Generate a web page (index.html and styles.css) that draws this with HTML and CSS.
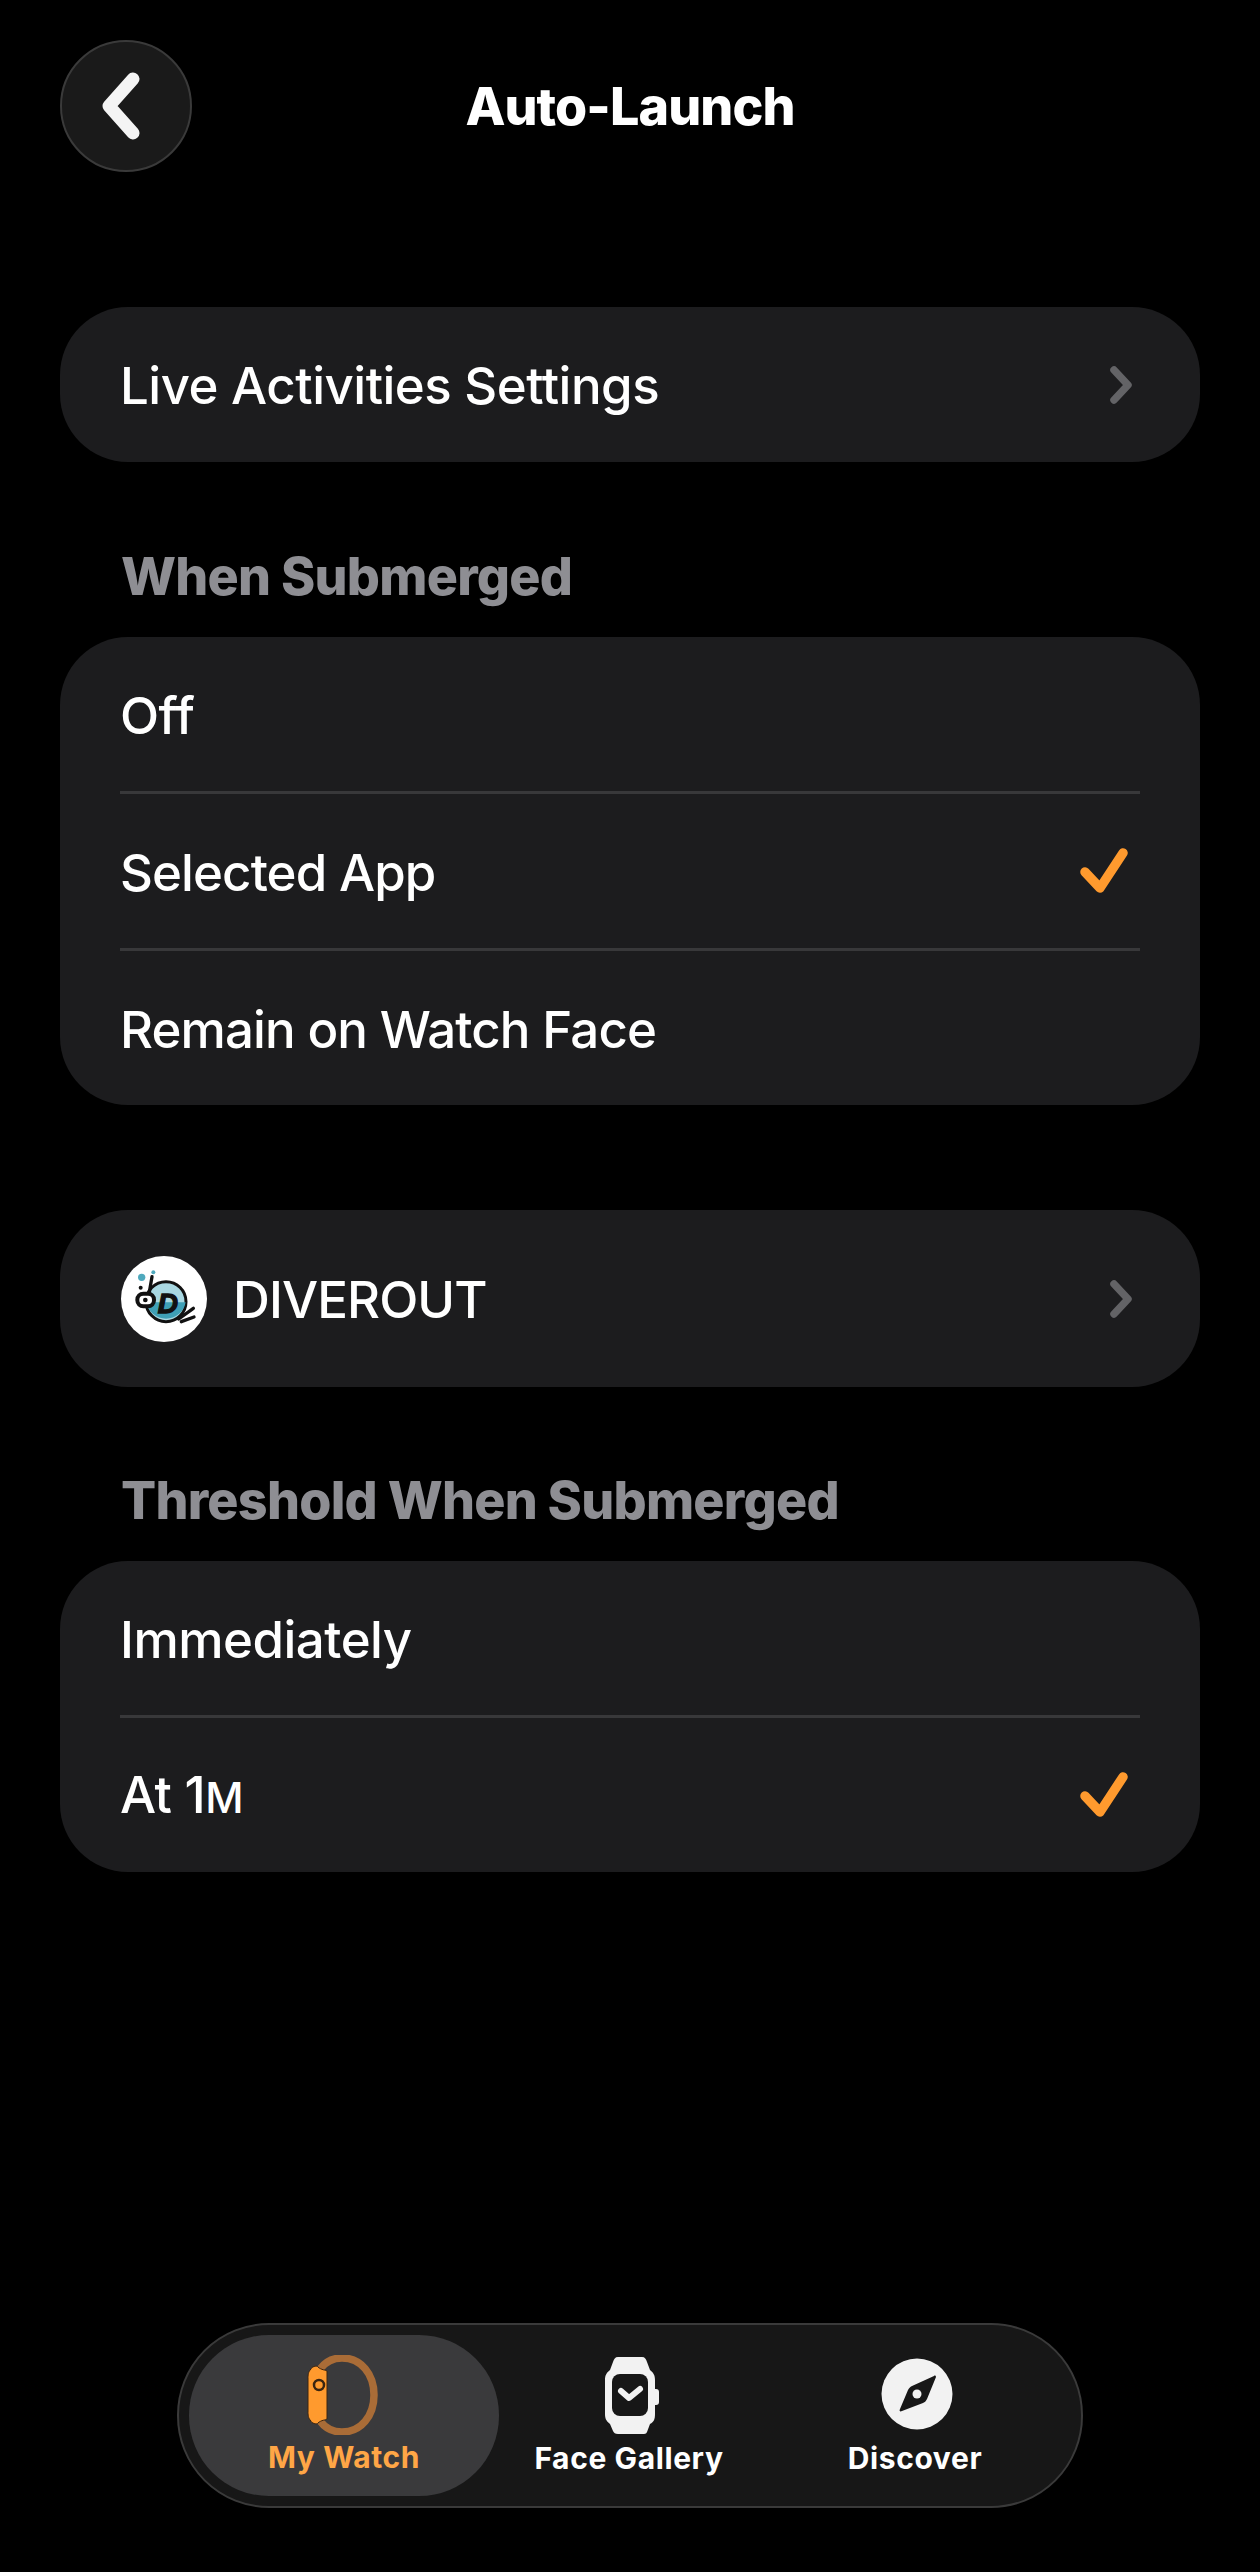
FILE: index.html
```html
<!DOCTYPE html>
<html lang="en">
<head>
<meta charset="utf-8">
<title>Auto-Launch</title>
<link rel="stylesheet" href="styles.css">
</head>
<body>
<div class="page">
  <header class="topbar">
    <button class="back" aria-label="Back">
      <svg class="back-icon" viewBox="0 0 48 72"><path d="M36 9 12 36l24 27"/></svg>
    </button>
    <h1 class="title">Auto-Launch</h1>
  </header>

  <section class="card card-live">
    <div class="row">
      <span class="row-text">Live Activities Settings</span>
      <svg class="chevron" viewBox="0 0 26 40"><path d="M6 5l14 15L6 35"/></svg>
    </div>
  </section>

  <h2 class="label label-first">When Submerged</h2>
  <section class="card card-list">
    <div class="row"><span class="row-text">Off</span></div>
    <div class="divider"></div>
    <div class="row">
      <span class="row-text row-text-tight">Selected App</span>
      <svg class="check" viewBox="0 0 50 46"><path d="M5 24l15 16L43 5"/></svg>
    </div>
    <div class="divider"></div>
    <div class="row"><span class="row-text row-text-tight">Remain on Watch Face</span></div>
  </section>

  <section class="card card-app">
    <div class="row row-app">
      <svg class="logo" viewBox="33 33 258 258">
        <circle cx="162" cy="162" r="129" fill="#fff"/>
        <circle cx="95" cy="97" r="11" fill="#4fa9bd"/>
        <circle cx="130" cy="82" r="6" fill="#4fa9bd"/>
        <circle cx="92" cy="128" r="6" fill="#111"/>
        <circle cx="168" cy="170" r="60" fill="#a9d8e2" stroke="#111" stroke-width="9"/>
        <path d="M109 172a60 60 0 0 0 118 0z" fill="#3fa0b6"/>
        <path d="M126 95l-9 52" fill="none" stroke="#111" stroke-width="10" stroke-linecap="round"/>
        <rect x="82" y="146" width="50" height="38" rx="18" fill="#fff" stroke="#111" stroke-width="12"/>
        <circle cx="106" cy="165" r="7" fill="#111"/>
        <path d="M206 222l44-32M214 230l38-14" fill="none" stroke="#111" stroke-width="10" stroke-linecap="round"/>
        <text class="logo-d" x="143" y="203">D</text>
      </svg>
      <span class="row-text row-text-tight">DIVEROUT</span>
      <svg class="chevron" viewBox="0 0 26 40"><path d="M6 5l14 15L6 35"/></svg>
    </div>
  </section>

  <h2 class="label label-second">Threshold When Submerged</h2>
  <section class="card card-list">
    <div class="row"><span class="row-text">Immediately</span></div>
    <div class="divider"></div>
    <div class="row">
      <span class="row-text">At 1<span class="unit">M</span></span>
      <svg class="check" viewBox="0 0 50 46"><path d="M5 24l15 16L43 5"/></svg>
    </div>
  </section>

  <nav class="tabbar">
    <div class="tab tab-active">
      <svg class="tab-icon icon-mine" viewBox="0 0 76 80">
        <path class="band" d="M16 14C22 6 30 3 38 3c19 0 32 16 32 37S57 77 38 77c-8 0-16-3-22-11"/>
        <path class="case" d="M7 14c0-2 6-4 7-2 3 3 8 3 9 4v48c-1 1-6 1-9 4-1 2-7 0-7-2-3-3-3-6-3-10V24c0-4 0-7 3-10z"/>
        <circle class="crown" cx="15" cy="30" r="5"/>
      </svg>
      <span class="tab-label">My Watch</span>
    </div>
    <div class="tab">
      <svg class="tab-icon icon-face" viewBox="0 0 54 78">
        <path class="white" d="M13 1h24c3 0 4 2 5 5l3 8c4 3 5 6 5 10v9h1c2 0 3 1 3 3v10c0 2-1 3-3 3h-1v9c0 5-1 8-5 10l-3 8c-1 2-2 2-5 2H13c-3 0-4-1-5-3l-3-7c-4-3-5-6-5-10V24c0-4 1-7 5-10l3-8c1-3 2-5 5-5z"/>
        <rect class="face" x="7" y="18" width="36" height="42" rx="8"/>
        <path class="tick" d="M16 35l8 7 11-9"/>
      </svg>
      <span class="tab-label">Face Gallery</span>
    </div>
    <div class="tab">
      <svg class="tab-icon icon-compass" viewBox="0 0 72 72">
        <circle class="white" cx="36" cy="36" r="35.5"/>
        <path class="needle" d="M53 18c1-1 2 0 2 1L46 41c-1 2-2 3-4 4L21 53c-2 1-3 0-2-2l8-19c1-2 2-3 4-4z"/>
        <circle class="white" cx="36" cy="36" r="4.5"/>
      </svg>
      <span class="tab-label">Discover</span>
    </div>
  </nav>
</div>
</body>
</html>
```
FILE: styles.css
```css
* { box-sizing: border-box; }
html, body { margin: 0; padding: 0; background: #000; }
.page {
  width: 1260px;
  height: 2572px;
  padding: 40px 60px 64px;
  display: flex;
  flex-direction: column;
  color: #fff;
  font-family: Inter, "Liberation Sans", sans-serif;
}
.topbar {
  position: relative;
  height: 132px;
  display: flex;
  align-items: center;
  justify-content: center;
  margin-bottom: 135px;
}
.back {
  position: absolute;
  left: 0;
  top: 0;
  width: 132px;
  height: 132px;
  padding: 0;
  border-radius: 50%;
  background: #1a1a1a;
  border: 2px solid #3a3a3a;
  display: flex;
  align-items: center;
  justify-content: center;
}
.back-icon { width: 48px; height: 72px; margin-right: 10px; fill: none; stroke: #f4f4f4; stroke-width: 13; stroke-linecap: round; stroke-linejoin: round; }
.title { margin: 0; padding-top: 2px; font-size: 52px; font-weight: 800; letter-spacing: -0.9px; line-height: 60px; }
.card { background: #1c1c1e; border-radius: 68px; padding: 0 60px; }
.card-app { margin-top: 105px; }
.row { height: 155px; display: flex; align-items: center; justify-content: space-between; }
.card-list .row { height: 154px; }
.row-text { padding-top: 3px; font-size: 51px; font-weight: 550; letter-spacing: -0.5px; line-height: 60px; }
.row-text-tight { letter-spacing: -0.9px; }
.row-app { height: 177px; justify-content: flex-start; }
.row-app .row-text { margin-left: 26px; }
.row-app .chevron { margin-left: auto; }
.unit { font-size: 42px; }
.divider { height: 3px; background: #38383a; }
.chevron { width: 26px; height: 40px; margin-right: 6px; fill: none; stroke: #636366; stroke-width: 7.5; stroke-linecap: round; stroke-linejoin: round; }
.check { width: 50px; height: 46px; margin-right: 10px; fill: none; stroke: #ff9a2e; stroke-width: 9.5; stroke-linecap: round; stroke-linejoin: round; }
.logo { width: 86px; height: 86px; flex: none; margin-left: 1px; }
.logo-d { font-family: "Liberation Sans", sans-serif; font-weight: 700; font-style: italic; font-size: 84px; fill: #111; stroke: #111; stroke-width: 4; }
.label { margin: 0 0 0 61px; font-size: 52px; font-weight: 800; letter-spacing: -0.75px; line-height: 60px; color: #8e8e93; }
.label-first { margin-top: 85px; margin-bottom: 30px; }
.label-second { margin-top: 84px; margin-bottom: 30px; }
.tabbar {
  margin-top: auto;
  margin-left: 117px;
  width: 906px;
  height: 185px;
  padding: 10px;
  border: 2px solid #3a3a3a;
  border-radius: 92px;
  background: #171717;
  display: grid;
  grid-template-columns: 310px 260px 1fr;
}
.tab { display: flex; flex-direction: column; align-items: center; justify-content: flex-start; padding-top: 22px; border-radius: 80px; }
.tab-active { background: #3a3a3c; color: #ffa646; }
.tab-icon { display: block; }
.tab-label { font-size: 30px; font-weight: 700; line-height: 36px; letter-spacing: 0.6px; }
.icon-mine { width: 76px; height: 80px; margin: -2px 0 4px -4px; }
.icon-face { width: 54px; height: 78px; margin: -1px 0 6px 6px; }
.icon-compass { width: 72px; height: 72px; margin: 1px 0 10px 3px; }
.band { fill: none; stroke: #a96c37; stroke-width: 7.5; stroke-linecap: round; }
.case { fill: #ff9a2e; stroke: #3a2410; stroke-width: 1; }
.crown { fill: none; stroke: #3a2410; stroke-width: 2.5; }
.white { fill: #f2f2f2; }
.face { fill: #171717; }
.tick { fill: none; stroke: #f2f2f2; stroke-width: 6; stroke-linecap: round; stroke-linejoin: round; }
.needle { fill: #171717; }
```
